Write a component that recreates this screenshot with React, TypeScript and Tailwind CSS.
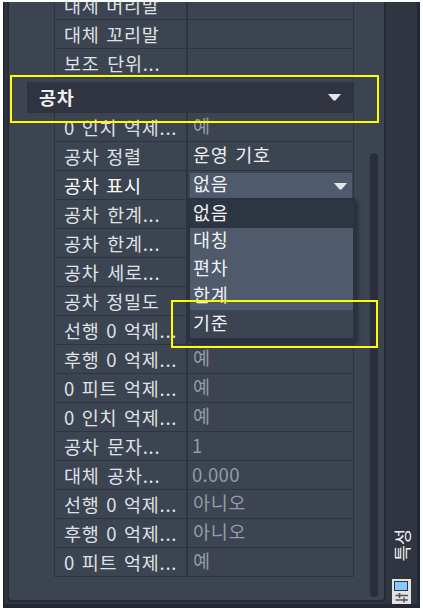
import clsx from 'clsx'

interface Prop {
  label: string
  value?: string
  active?: boolean
  editable?: boolean
}

const TEXT_PROPS: Prop[] = [
  { label: '대체 머리말' },
  { label: '대체 꼬리말' },
  { label: '보조 단위...' },
]

const TOLERANCE_PROPS: Prop[] = [
  { label: '0 인치 억제...', value: '예' },
  { label: '공차 정렬', value: '운영 기호', editable: true },
  { label: '공차 표시', value: '없음', active: true },
  { label: '공차 한계...' },
  { label: '공차 한계...' },
  { label: '공차 세로...' },
  { label: '공차 정밀도' },
  { label: '선행 0 억제...' },
  { label: '후행 0 억제...', value: '예' },
  { label: '0 피트 억제...', value: '예' },
  { label: '0 인치 억제...', value: '예' },
  { label: '공차 문자...', value: '1' },
  { label: '대체 공차...', value: '0.000' },
  { label: '선행 0 억제...', value: '아니오' },
  { label: '후행 0 억제...', value: '아니오' },
  { label: '0 피트 억제...', value: '예' },
]

const OPTIONS = ['없음', '대칭', '편차', '한계', '기준']

function Arrow() {
  return (
    <svg width="13" height="7" viewBox="0 0 13 7" className="shrink-0">
      <path d="M0 0H13L7.5 6.5H5.5Z" fill="#e6e6e6" />
    </svg>
  )
}

function Select({ value }: { value: string }) {
  return (
    <div className="relative w-full">
      <div className="ml-[2px] mt-[2px] flex h-[25px] w-[162px] items-center justify-between bg-[#4f5a6d] pl-[3px] pr-[5px] text-[#f0f1f3]">
        <span className="relative -top-[2px]">{value}</span>
        <span className="mt-[2px]"><Arrow /></span>
      </div>
      <ul className="absolute left-0 top-[27px] z-10 w-[167px] border-x-2 border-b-[3px] border-t-2 border-[#2b313d] bg-[#3c4351] text-[#f0f1f3] shadow-[3px_3px_4px_rgba(25,30,40,0.6)]">
        {OPTIONS.map((o, i) => (
          <li
            key={o}
            className={clsx(
              'flex items-center pl-[3px]',
              i === 0 && 'h-[28px] bg-[#2d3542]',
              i > 0 && i < 4 && 'h-[27.4px] bg-[#4f5a6d]',
              i === 4 && 'h-[28px]',
            )}
          >
            <span className="relative -top-[2px]">{o}</span>
          </li>
        ))}
      </ul>
    </div>
  )
}

function Row({ label, value, active, editable }: Prop) {
  const words = label.split(' ').length
  const truncated = label.endsWith('...')
  const numeric = /^[\d.]+$/.test(value ?? '')
  return (
    <div className="flex h-[29px] border-b border-l border-r border-[#2e3440]">
      <div className={clsx('flex w-[133px] shrink-0 items-center border-r-2 border-[#2e3440] pl-[9px]', active ? 'text-white' : 'text-[#dfe1e4]')}>
        <span className={clsx('whitespace-pre', truncated && words === 2 ? '[word-spacing:3px]' : '[word-spacing:2px]')}>
          {label}
        </span>
      </div>
      {active ? (
        <Select value={value ?? ''} />
      ) : (
        <div
          className={clsx(
            'flex items-center',
            numeric ? 'pl-[4px] tracking-[0.3px]' : 'pl-[5px]',
            editable ? 'text-[#eceef0]' : 'text-[#959ba5]',
          )}
        >
          <span className={clsx('relative [word-spacing:2px]', numeric ? '-top-px' : '-top-[2px]')}>{value}</span>
        </div>
      )}
    </div>
  )
}

function PaletteIcon() {
  return (
    <svg width="19" height="25" viewBox="0 0 19 25">
      <rect width="19" height="25" fill="#e2e2e0" />
      <rect x="2.5" y="2.5" width="13" height="9" fill="#86c8ff" stroke="#303641" />
      <path d="M3.5 16.5H16M3.5 21H16" stroke="#555" strokeWidth="1.3" />
      <path d="M7.5 14V19M12 18.5V23.5" stroke="#555" strokeWidth="1.6" />
    </svg>
  )
}

export default function App() {
  return (
    <div className="relative h-[610px] w-[423px] overflow-hidden bg-white pl-[3px] pt-[2px] font-['Noto_Sans_CJK_KR',sans-serif] text-[18.5px] leading-none tracking-[0.7px]">
      <div className="flex h-[606px] w-[417px] border-b-4 border-l-2 border-r-[3px] border-[#222934] bg-[#2f3541] pl-[2px]">
        <div className="h-[600px] w-[379px] shrink-0 overflow-hidden rounded-b-[5px] border-b-2 border-l-2 border-r-2 border-[#252b36] bg-[#3c4452]">
          <div className="flex">
            <div className="-mt-[11px] w-[345px] shrink-0 pl-[18px]">
              <div className="ml-[27px] w-[300px]">
                {TEXT_PROPS.map(p => <Row key={p.label} {...p} />)}
              </div>
              <div className="mt-[4px] flex h-[31px] items-center justify-between bg-[#2f3440] pl-[12px] pr-[13px]">
                <span className="font-bold text-[#eceef0]">공차</span>
                <Arrow />
              </div>
              <div className="ml-[27px] w-[300px]">
                {TOLERANCE_PROPS.map((p, i) => <Row key={i} {...p} />)}
              </div>
            </div>
            <div className="ml-[16px] mt-[151px] h-[444px] w-[8px] shrink-0 rounded-full bg-[#282e3a]" />
          </div>
        </div>
        <div className="flex w-[31px] flex-col items-center justify-end text-[#eceef0]">
          <span className="mb-[18px] ml-px rotate-180 text-[17.5px] leading-[18px] tracking-normal [writing-mode:vertical-rl] [text-orientation:sideways]">특성</span>
          <PaletteIcon />
        </div>
      </div>

      {/* highlight frames */}
      <div className="absolute left-[10px] top-[75px] z-20 h-[48px] w-[369px] border-2 border-[#ffff00]" />
      <div className="absolute left-[171px] top-[300px] z-20 h-[48px] w-[207px] border-2 border-[#ffff00]" />
    </div>
  )
}
